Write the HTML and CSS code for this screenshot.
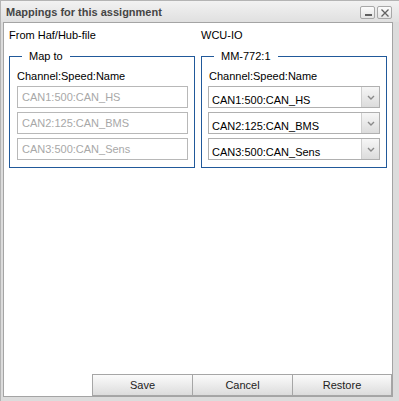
FILE: index.html
```html
<!DOCTYPE html>
<html lang="en">
<head>
    <meta charset="UTF-8">
    <meta name="viewport" content="width=device-width, initial-scale=1.0">
    <title>Mappings for this assignment</title>
    <link rel="stylesheet" href="styles.css">
</head>
<body>

    <div class="window">
        <div class="titlebar">
            <span class="title">Mappings for this assignment</span>
            <div class="tools">
                <span class="tool">
                    <svg width="12" height="10" viewBox="0 0 12 10"><rect x="3" y="6" width="7" height="2" fill="#606060"/></svg>
                </span>
                <span class="tool">
                    <svg width="12" height="10" viewBox="0 0 12 10"><path d="M2.5 1.5 L9.5 8.5 M9.5 1.5 L2.5 8.5" stroke="#606060" stroke-width="1.3" fill="none"/></svg>
                </span>
            </div>
        </div>

        <div class="panel">
            <div class="columns">
                <div class="column">
                    <div class="source">From Haf/Hub-file</div>
                    <fieldset class="group">
                        <legend>Map to</legend>
                        <div class="caption">Channel:Speed:Name</div>
                        <input class="field" type="text" value="CAN1:500:CAN_HS" readonly>
                        <input class="field" type="text" value="CAN2:125:CAN_BMS" readonly>
                        <input class="field" type="text" value="CAN3:500:CAN_Sens" readonly>
                    </fieldset>
                </div>

                <div class="column">
                    <div class="source">WCU-IO</div>
                    <fieldset class="group">
                        <legend>MM-772:1</legend>
                        <div class="caption">Channel:Speed:Name</div>
                        <div class="combo">
                            <span class="combo-text">CAN1:500:CAN_HS</span>
                            <span class="combo-trigger"><svg width="8" height="5" viewBox="0 0 8 5"><path d="M1 1 L4 4 L7 1" stroke="#8a8a8a" stroke-width="1.4" fill="none"/></svg></span>
                        </div>
                        <div class="combo">
                            <span class="combo-text">CAN2:125:CAN_BMS</span>
                            <span class="combo-trigger"><svg width="8" height="5" viewBox="0 0 8 5"><path d="M1 1 L4 4 L7 1" stroke="#8a8a8a" stroke-width="1.4" fill="none"/></svg></span>
                        </div>
                        <div class="combo">
                            <span class="combo-text">CAN3:500:CAN_Sens</span>
                            <span class="combo-trigger"><svg width="8" height="5" viewBox="0 0 8 5"><path d="M1 1 L4 4 L7 1" stroke="#8a8a8a" stroke-width="1.4" fill="none"/></svg></span>
                        </div>
                    </fieldset>
                </div>
            </div>

            <div class="buttons">
                <button type="button" class="btn">Save</button>
                <button type="button" class="btn">Cancel</button>
                <button type="button" class="btn">Restore</button>
            </div>
        </div>
    </div>

</body>
</html>
```

FILE: styles.css
```css
body {
    margin: 0;
    font-family: "Liberation Sans", Arial, sans-serif;
    font-size: 11px;
    line-height: 14px;
    color: #000;
}

.window {
    width: 399px;
    height: 401px;
    box-sizing: border-box;
    background-color: #dcdcdc;
    border-top: 1px solid #b4b4b4;
    border-left: 1px solid #b4b4b4;
}

.titlebar {
    display: flex;
    align-items: center;
    justify-content: space-between;
    height: 21px;
    padding-left: 5px;
    background: linear-gradient(#f2f2f2, #e0e0e0);
}

.title {
    font-weight: bold;
    color: #454545;
    padding-top: 1px;
}

.tools {
    display: flex;
    gap: 2px;
    margin-right: 7px;
    padding-top: 2px;
}

.tool {
    display: flex;
    align-items: center;
    justify-content: center;
    width: 13px;
    height: 11px;
    border: 1px solid #a8a8a8;
    border-radius: 2px;
    background: linear-gradient(#fcfcfc, #e4e4e4);
}

.panel {
    display: flex;
    flex-direction: column;
    width: 390px;
    height: 375px;
    margin-left: 2px;
    box-sizing: border-box;
    background-color: #fff;
    border: 1px solid #a4a4a4;
}

.columns {
    display: flex;
    gap: 6px;
    padding: 5px 0 0 5px;
}

.column {
    width: 186px;
}

.source {
    margin-bottom: 7px;
}

.group {
    margin: 0;
    padding: 6px 6px 7px 7px;
    border: 1px solid #21599a;
}

.group legend {
    padding: 0 7px;
    margin-left: 5px;
}

.caption {
    margin-bottom: 3px;
}

.field {
    display: block;
    width: 100%;
    height: 22px;
    margin: 0 0 4px 0;
    padding: 0 4px;
    box-sizing: border-box;
    border: 1px solid #b8b8b8;
    background-color: #fff;
    color: #a8a8a8;
    font-family: "Liberation Sans", Arial, sans-serif;
    font-size: 11px;
    outline: none;
}

.field:last-child,
.combo:last-child {
    margin-bottom: 0;
}

.combo {
    display: flex;
    height: 22px;
    margin: 0 0 4px -1px;
    box-sizing: border-box;
    border: 1px solid #b0b0b0;
}

.combo-text {
    flex: 1;
    padding: 6px 0 0 3px;
}

.combo-trigger {
    display: flex;
    align-items: center;
    justify-content: center;
    width: 17px;
    border-left: 1px solid #cfcfcf;
    background: linear-gradient(#f6f6f6, #dcdcdc);
}

.buttons {
    display: flex;
    justify-content: flex-end;
    margin-top: auto;
}

.btn {
    width: 101px;
    height: 22px;
    margin-left: -1px;
    padding: 0;
    border: 1px solid #a6a6a6;
    background: linear-gradient(#fbfbfb, #dcdcdc);
    color: #222;
    font-family: "Liberation Sans", Arial, sans-serif;
    font-size: 11px;
    cursor: pointer;
}

.btn:last-child {
    width: 100px;
}
```
